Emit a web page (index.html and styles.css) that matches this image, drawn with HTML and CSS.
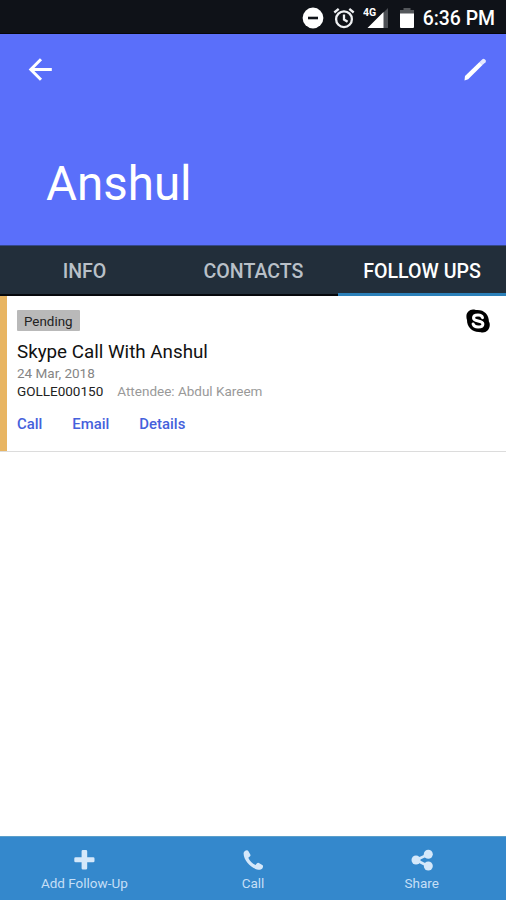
FILE: index.html
```html
<!DOCTYPE html>
<html lang="en">
<head>
  <meta charset="UTF-8">
  <meta name="viewport" content="width=device-width, initial-scale=1.0">
  <title>Anshul - Follow Ups</title>
  <link rel="stylesheet" href="styles.css">
</head>
<body>
  <div class="app">
    <div class="status-bar">
      <svg class="status-dnd" width="22" height="22" viewBox="0 0 22 22">
        <circle cx="11" cy="11" r="10.4" fill="#fff"/>
        <rect x="6" y="9.7" width="10" height="2.6" fill="#0f1218"/>
      </svg>
      <svg class="status-alarm" width="22" height="22" viewBox="0 0 22 22" fill="none" stroke="#eef0f2" stroke-width="2.3">
        <circle cx="11" cy="12.200" r="7.900"/>
        <path d="M11 7.500v5l3.600 2.300M1.300 5.500L5.700 1.800M20.700 5.500l-4.400-3.700"/>
      </svg>
      <svg class="status-signal" width="27" height="22" viewBox="0 0 27 22">
        <path d="M25 1v20H5z" fill="#4c4f54"/>
        <path d="M20.500 5V21H4.500z" fill="#fff"/>
        <text class="signal-text" x="0" y="9">4G</text>
      </svg>
      <svg class="status-battery" width="14" height="22" viewBox="0 0 14 22">
        <path d="M3.500 1h7v2H14v4H0V3h3.500z" fill="#54575b"/>
        <path d="M0 6.500h14V20a1 1 0 0 1-1 1H1a1 1 0 0 1-1-1z" fill="#fff"/>
      </svg>
      <span class="time">6:36 PM</span>
    </div>

    <header class="header">
      <div class="toolbar">
        <svg width="24" height="24" viewBox="0 0 24 24" fill="none" stroke="#fff" stroke-width="3">
          <path d="M23.800 12.500H3.500M13 2.200L2.800 12.500 13 22.800"/>
        </svg>
        <svg width="24" height="24" viewBox="0 0 24 24" fill="#fff">
          <path d="M2 19L16.500 5l3 3L5.200 22.300 1.500 23.500z"/>
          <path d="M16.500 5l2.900-2.700q1.200-1 2.300 0l.8.8q1 1.100 0 2.200l-3 2.700z" opacity=".85"/>
        </svg>
      </div>
      <h1 class="name">Anshul</h1>
    </header>

    <nav class="tabs">
      <div class="tab">INFO</div>
      <div class="tab">CONTACTS</div>
      <div class="tab active">FOLLOW UPS</div>
    </nav>

    <main class="content">
      <div class="card">
        <div class="card-body">
          <span class="badge">Pending</span>
          <div class="card-title">Skype Call With Anshul</div>
          <div class="card-date">24 Mar, 2018</div>
          <div class="card-meta">
            <span class="code">GOLLE000150</span>
            <span class="attendee">Attendee: Abdul Kareem</span>
          </div>
          <div class="card-links">
            <a class="link-call">Call</a>
            <a class="link-email">Email</a>
            <a class="link-details">Details</a>
          </div>
        </div>
        <svg class="skype" width="24" height="24" viewBox="0 0 24 24">
          <path d="M7 .5c1.700 0 2.600.4 3.600.5C18 .6 23 5.500 22.900 12.600c.8 1.400 1 2.500.8 4.200-.3 3.700-3.100 6.700-6.900 6.700-1.600 0-2.600-.2-3.700-.5C6.200 23.200.9 18 1 11 .6 9.800.3 8.700.4 7.200.5 3.500 3.300.5 7 .5z" fill="#000"/>
          <path d="M16.500 8.600C16 6.900 14.300 6.100 12 6.100c-2.700 0-4.500 1-4.500 2.800 0 4.200 9.400 1.800 9.400 6.100 0 2-2.100 3-4.800 3-2.600 0-4.400-1-5-3" fill="none" stroke="#fff" stroke-width="3" stroke-linecap="round"/>
        </svg>
      </div>
    </main>

    <footer class="bottom-bar">
      <div class="action">
        <svg width="22" height="22" viewBox="0 0 22 22" fill="#d5e8fa">
          <path d="M9.900 1h3q1.300 0 1.300 1.300v6h6q1.300 0 1.300 1.300v2.400q0 1.300-1.300 1.300h-6v6q0 1.300-1.300 1.300h-3q-1.300 0-1.300-1.300v-6h-6Q1.300 13.300 1.300 12V9.600q0-1.300 1.300-1.300h6v-6Q8.600 1 9.900 1z"/>
        </svg>
        <span>Add Follow-Up</span>
      </div>
      <div class="action">
        <svg width="22" height="22" viewBox="0 0 22 22" fill="#d5e8fa">
          <path d="M1.600 4.500C1.600 3 2.500 2 3.800 1.500q1.800-.7 2.500.5l2 3.400q.6 1.100-.5 2.100L6.300 8.800c1.300 3.200 4 5.900 7.200 7.200l1.300-1.500q1-1.100 2.100-.5l3.400 2q1.200.7.5 2.500c-.5 1.300-1.500 2.200-3 2.200C10.300 20.700 1.600 12 1.600 4.500z"/>
        </svg>
        <span>Call</span>
      </div>
      <div class="action">
        <svg width="22" height="22" viewBox="0 0 22 22" fill="#d5e8fa">
          <path d="M17 5.500L5 11l12 6" fill="none" stroke="#d5e8fa" stroke-width="2.600"/>
          <circle cx="17.300" cy="5.300" r="4.500"/>
          <circle cx="5" cy="11" r="4.500"/>
          <circle cx="17.300" cy="17" r="4.500"/>
        </svg>
        <span>Share</span>
      </div>
    </footer>
  </div>
</body>
</html>
```

FILE: styles.css
```css
* {
  box-sizing: border-box;
}
body {
  margin: 0;
  background: #fff;
  font-family: Roboto, "Liberation Sans", sans-serif;
}
.app {
  display: flex;
  flex-direction: column;
  height: 900px;
}

/* status bar */
.status-bar {
  display: flex;
  justify-content: flex-end;
  align-items: center;
  height: 34px;
  padding: 2px 11px 0 0;
  background: #0f1218;
  border-bottom: 1px solid #05060c;
}
.status-dnd {
  margin-right: 9px;
}
.status-alarm {
  margin-right: 8px;
}
.status-signal {
  margin-right: 10px;
}
.status-battery {
  margin-right: 9px;
}
.signal-text {
  font-size: 10.5px;
  font-weight: 700;
  fill: #fff;
}
.time {
  padding-top: 1px;
  color: #fff;
  font-size: 19.4px;
  font-weight: 500;
  line-height: 23px;
}

/* header */
.header {
  height: 211px;
  padding: 23px 19px 0 28px;
  background: #5a6ffa;
}
.toolbar {
  display: flex;
  justify-content: space-between;
}
.name {
  margin: 74px 0 0 18px;
  color: #fff;
  font-size: 47.5px;
  font-weight: 400;
  line-height: 58px;
}

/* tabs */
.tabs {
  display: grid;
  grid-template-columns: 169px 169px 168px;
  height: 51px;
  background: #222e3a;
  border-top: 1px solid #34488a;
}
.tab {
  height: 50px;
  padding-top: 2px;
  border-bottom: 2px solid #06080c;
  color: #b9c0c8;
  font-size: 19.6px;
  font-weight: 500;
  line-height: 47px;
  text-align: center;
}
.tab.active {
  border-bottom: 3px solid #2b80b9;
  color: #fff;
}

/* follow up card */
.content {
  flex: 1;
}
.card {
  display: flex;
  justify-content: space-between;
  height: 155px;
  padding: 14px 16px 0 10px;
  border-left: 7px solid #e8b562;
  box-shadow: 0 1px 0 #dcdcdc;
}
.card-body {
  display: flex;
  flex-direction: column;
  align-items: flex-start;
}
.badge {
  height: 21px;
  padding: 0 7px;
  background: #b9b9b9;
  border-radius: 1px;
  color: #222;
  font-size: 13.4px;
  line-height: 23px;
}
.card-title {
  margin-top: 10px;
  color: #111;
  font-size: 18.8px;
  line-height: 22px;
}
.card-date {
  margin-top: 1px;
  color: #858585;
  font-size: 13.5px;
  line-height: 18px;
}
.card-meta {
  display: flex;
  gap: 14px;
  font-size: 13.5px;
  line-height: 18px;
}
.code {
  color: #222;
}
.attendee {
  color: #999;
}
.card-links {
  display: flex;
  gap: 30px;
  margin-top: 15px;
  color: #4561dc;
  font-size: 14.9px;
  font-weight: 500;
  line-height: 18px;
}
.skype {
  margin-top: -1px;
}

/* bottom bar */
.bottom-bar {
  display: grid;
  grid-template-columns: repeat(3, 1fr);
  height: 64px;
  background: #3488cc;
  border-top: 1px solid #5b9fca;
}
.action {
  display: flex;
  flex-direction: column;
  align-items: center;
  padding-top: 12px;
  color: #c5dff6;
  font-size: 13.5px;
  line-height: 16px;
}
.action span {
  margin-top: 4px;
}
```
